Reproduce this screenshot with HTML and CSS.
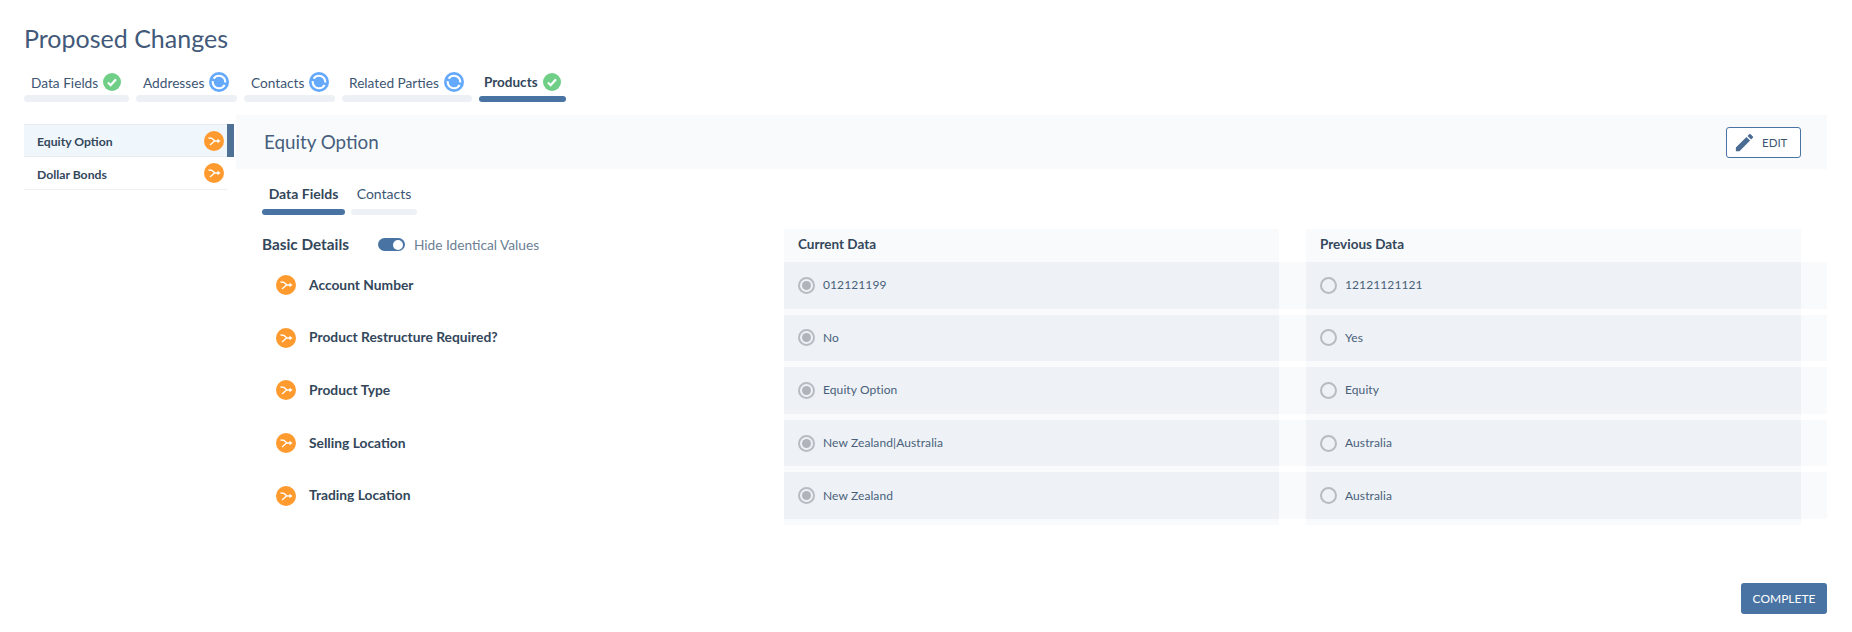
FILE: index.html
```html
<!DOCTYPE html>
<html lang="en">
<head>
<meta charset="utf-8">
<title>Proposed Changes</title>
<link rel="stylesheet" href="styles.css">
</head>
<body>
<svg class="defs" width="0" height="0" aria-hidden="true">
  <symbol id="i-check" viewBox="0 0 20 20"><circle cx="10" cy="10" r="10" fill="#6fcf87"/><path d="M5.500 10.500l3 3 6-6.500" fill="none" stroke="#fff" stroke-width="2.400"/></symbol>
  <symbol id="i-progress" viewBox="0 0 20 20"><circle cx="10" cy="10" r="10" fill="#64a9fb"/><circle cx="10" cy="10" r="6.300" fill="none" stroke="#fff" stroke-width="2.100" stroke-dasharray="17.300 2.500" stroke-dashoffset="-3"/></symbol>
  <symbol id="i-merge" viewBox="0 0 20 20"><circle cx="10" cy="10" r="10" fill="#ff9a2f"/><path d="M4.500 7l3.500.4L11 10h4.500M6 14l4.500-4M13.500 8.500l2 1.500-2 1.500" fill="none" stroke="#fff" stroke-width="1.300"/></symbol>
</svg>
<div class="page">
  <h1 class="title">Proposed Changes</h1>
  <nav class="tabs">
    <a class="tab t1"><span class="tab-in">Data Fields<svg class="ic18"><use href="#i-check"/></svg></span></a>
    <a class="tab t2"><span class="tab-in">Addresses<svg class="ic20"><use href="#i-progress"/></svg></span></a>
    <a class="tab t3"><span class="tab-in">Contacts<svg class="ic20"><use href="#i-progress"/></svg></span></a>
    <a class="tab t4"><span class="tab-in">Related Parties<svg class="ic20"><use href="#i-progress"/></svg></span></a>
    <a class="tab t5 active"><span class="tab-in">Products<svg class="ic18"><use href="#i-check"/></svg></span></a>
  </nav>
  <div class="main">
    <aside class="side">
      <div class="side-row active"><div class="side-item"><span class="side-text">Equity Option</span><svg class="ic20"><use href="#i-merge"/></svg></div><div class="side-mark"></div></div>
      <div class="side-row"><div class="side-item"><span class="side-text">Dollar Bonds</span><svg class="ic20"><use href="#i-merge"/></svg></div><div class="side-mark"></div></div>
    </aside>
    <section class="content">
      <header class="head">
        <h2 class="head-title">Equity Option</h2>
        <button class="edit"><svg class="pencil" viewBox="0 0 24 24"><path d="M3 17.250V21h3.750L17.810 9.940l-3.750-3.750L3 17.250zM20.710 7.040a1 1 0 0 0 0-1.410l-2.340-2.340a1 1 0 0 0-1.410 0l-1.830 1.830 3.750 3.750 1.830-1.830z"/></svg>EDIT</button>
      </header>
      <nav class="subtabs">
        <a class="subtab s1 active">Data Fields</a>
        <a class="subtab s2">Contacts</a>
      </nav>
      <div class="compare">
        <div class="row row-head">
          <div class="row-label head-label">
            <span class="basic">Basic Details</span>
            <span class="toggle"><span class="knob"></span></span>
            <span class="hide">Hide Identical Values</span>
          </div>
          <div class="vals"><div class="hcell">Current Data</div><div class="gap"></div><div class="hcell">Previous Data</div><div class="end"></div></div>
        </div>
        <div class="row">
          <div class="row-label"><svg class="ic20"><use href="#i-merge"/></svg><span class="field">Account Number</span></div>
          <div class="vals"><div class="cell"><span class="radio on"></span><span>012121199</span></div><div class="gap"></div><div class="cell"><span class="radio"></span><span>12121121121</span></div><div class="end"></div></div>
        </div>
        <div class="row">
          <div class="row-label"><svg class="ic20"><use href="#i-merge"/></svg><span class="field">Product Restructure Required?</span></div>
          <div class="vals"><div class="cell"><span class="radio on"></span><span>No</span></div><div class="gap"></div><div class="cell"><span class="radio"></span><span>Yes</span></div><div class="end"></div></div>
        </div>
        <div class="row">
          <div class="row-label"><svg class="ic20"><use href="#i-merge"/></svg><span class="field">Product Type</span></div>
          <div class="vals"><div class="cell"><span class="radio on"></span><span>Equity Option</span></div><div class="gap"></div><div class="cell"><span class="radio"></span><span>Equity</span></div><div class="end"></div></div>
        </div>
        <div class="row">
          <div class="row-label"><svg class="ic20"><use href="#i-merge"/></svg><span class="field">Selling Location</span></div>
          <div class="vals"><div class="cell"><span class="radio on"></span><span>New Zealand|Australia</span></div><div class="gap"></div><div class="cell"><span class="radio"></span><span>Australia</span></div><div class="end"></div></div>
        </div>
        <div class="row">
          <div class="row-label"><svg class="ic20"><use href="#i-merge"/></svg><span class="field">Trading Location</span></div>
          <div class="vals"><div class="cell"><span class="radio on"></span><span>New Zealand</span></div><div class="gap"></div><div class="cell"><span class="radio"></span><span>Australia</span></div><div class="end"></div></div>
        </div>
      </div>
      <div class="actions"><button class="complete">COMPLETE</button></div>
    </section>
  </div>
</div>
</body>
</html>
```
FILE: styles.css
```css
* { box-sizing: border-box; }
html, body { margin: 0; padding: 0; background: #fff; }
body { font-family: "Lato", "Noto Sans", sans-serif; color: #33475b; height: 632px; overflow: hidden; }
.defs { position: absolute; }
.page { padding: 23px 25px 0 24px; }
.title { margin: 0; font-size: 25px; line-height: 30px; font-weight: 400; color: #42597a; }
.ic18 { width: 18px; height: 18px; flex: none; }
.ic20 { width: 20px; height: 20px; flex: none; }

.tabs { display: flex; margin-top: 18px; gap: 7px; }
.tab { display: flex; flex-direction: column; height: 31px; font-size: 13.700px; color: #3d5673; padding-bottom: 7px; position: relative; white-space: nowrap; }
.tab::after { content: ""; position: absolute; left: 0; right: 0; bottom: 0; height: 7px; border-radius: 4px; background: #edf1f5; }
.tab.active::after { background: #4873a3; height: 6px; }
.tab.active { font-weight: 700; color: #33475b; font-size: 13.500px; }
.tab-in { display: flex; align-items: center; height: 22px; padding: 0 0 0 7px; gap: 5px; }
.t1 { width: 105px; }
.t2 { width: 101px; }
.t3 { width: 91px; }
.t4 { width: 130px; }
.t5 { width: 87px; }
.t5 .tab-in { padding-left: 5px; }

.main { display: flex; margin-top: 13px; gap: 2px; }
.side { width: 210px; padding-top: 9px; flex: none; }
.side-row { display: flex; }
.side-item { flex: 1; display: flex; justify-content: space-between; align-items: center; font-size: 12.200px; font-weight: 700; color: #33475b; padding: 0 3px 0 13px; height: 33px; border-bottom: 1px solid #edf0f3; }
.side-text { padding-top: 2px; }
.side-row.active .side-item { background: #eff6fc; border-top: 1px solid #e8ecf0; border-bottom: 1px solid #e8ecf0; }
.side-mark { width: 7px; }
.side-row.active .side-mark { background: #4f7196; }

.content { flex: 1; min-width: 0; }
.head { height: 54px; background: #f8fafc; display: flex; align-items: center; justify-content: space-between; padding: 0 26px 0 28px; }
.head-title { margin: 0 0 2px; font-size: 18.800px; font-weight: 400; color: #465e7c; }
.edit { width: 75px; height: 31px; border: 1px solid #4873a3; border-radius: 3px; background: #fff; display: flex; align-items: center; gap: 6px; padding: 0 0 0 6px; font: 400 11.500px "Lato", sans-serif; color: #3d5673; }
.pencil { width: 23px; height: 23px; fill: #4a6c92; flex: none; }

.subtabs { display: flex; gap: 6px; margin: 14px 0 0 26px; }
.subtab { height: 32px; font-size: 14px; line-height: 22px; color: #3d5673; text-align: center; position: relative; }
.subtab::after { content: ""; position: absolute; left: 0; right: 0; bottom: 0; height: 6px; border-radius: 3px; background: #edf1f5; }
.subtab.active { font-weight: 700; color: #33475b; }
.subtab.active::after { background: #4873a3; }
.s1 { width: 83px; }
.s2 { width: 66px; }

.compare { margin-top: 14px; padding-bottom: 6px; display: flex; flex-direction: column; gap: 6px; background: linear-gradient(to right, transparent 548px, #f8fafc 548px 1043px, transparent 1043px 1070px, #f8fafc 1070px 1565px, transparent 1565px); }
.row { display: flex; height: 46.600px; }
.row-head { height: 33px; margin-bottom: -6px; }
.row-label { width: 548px; flex: none; display: flex; align-items: center; padding-left: 40px; gap: 13px; }
.field { font-size: 13.800px; font-weight: 700; color: #33475b; position: relative; top: -1px; }
.head-label { padding: 0 0 4px 26px; gap: 0; }
.basic { font-size: 15.300px; font-weight: 700; color: #33475b; }
.toggle { width: 27px; height: 13px; border-radius: 7px; background: #4873a3; margin: 2px 0 0 29px; display: flex; align-items: center; justify-content: flex-end; padding-right: 2px; }
.knob { width: 10px; height: 10px; border-radius: 50%; background: #fff; }
.hide { font-size: 13.700px; color: #6b7f94; margin: 2px 0 0 9px; }
.vals { flex: 1; display: flex; }
.row:not(.row-head) .vals { background: #f8fafc; }
.hcell { width: 495px; font-size: 13.500px; font-weight: 700; color: #33475b; padding: 0 0 4px 14px; display: flex; align-items: center; }
.gap { width: 27px; flex: none; }
.end { flex: 1; }
.cell { width: 495px; background: #eef2f6; display: flex; align-items: center; padding-left: 14px; gap: 8px; font: 400 12px "Lato", sans-serif; letter-spacing: .1px; color: #48607a; }
.cell span:last-child:not(.radio) { padding-bottom: 1px; }
.radio { width: 17px; height: 17px; border-radius: 50%; border: 2px solid #b8bcc2; flex: none; display: flex; align-items: center; justify-content: center; }
.radio.on::after { content: ""; width: 9px; height: 9px; border-radius: 50%; background: #b0b4ba; }

.actions { display: flex; justify-content: flex-end; margin-top: 58px; }
.complete { width: 86px; height: 31px; border: 0; border-radius: 3px; background: #4873a3; color: #fff; font: 400 12px "Lato", sans-serif; padding: 0; }
```
